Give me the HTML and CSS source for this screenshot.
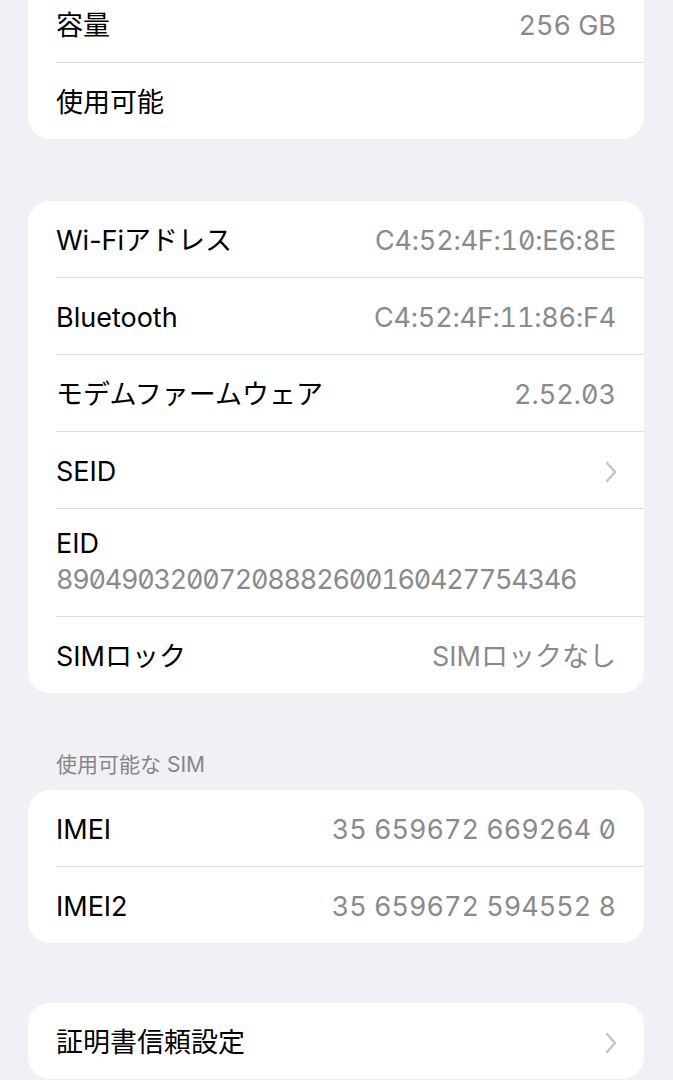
FILE: index.html
```html
<!DOCTYPE html>
<html lang="ja">
<head>
<meta charset="utf-8">
<link rel="stylesheet" href="styles.css">
</head>
<body>
<main class="page">
  <section class="card first">
    <div class="row"><span class="label">容量</span><span class="value">256 GB</span></div>
    <div class="row"><span class="label">使用可能</span><span class="value"></span></div>
  </section>

  <section class="card">
    <div class="row"><span class="label">Wi-Fiアドレス</span><span class="value mac">C4:52:4F:10:E6:8E</span></div>
    <div class="row"><span class="label">Bluetooth</span><span class="value mac">C4:52:4F:11:86:F4</span></div>
    <div class="row"><span class="label">モデムファームウェア</span><span class="value">2.52.03</span></div>
    <div class="row"><span class="label">SEID</span>
      <svg class="chev" viewBox="0 0 12 22" width="12" height="22"><path d="M2 2 L10 11 L2 20" fill="none" stroke="#c4c4c7" stroke-width="2.4" stroke-linecap="round" stroke-linejoin="round"/></svg>
    </div>
    <div class="row stack"><span class="label">EID</span><span class="value eid">89049032007208882600160427754346</span></div>
    <div class="row"><span class="label">SIMロック</span><span class="value">SIMロックなし</span></div>
  </section>

  <h2 class="header">使用可能な SIM</h2>
  <section class="card after-header">
    <div class="row"><span class="label">IMEI</span><span class="value">35 659672 669264 0</span></div>
    <div class="row"><span class="label">IMEI2</span><span class="value">35 659672 594552 8</span></div>
  </section>

  <section class="card last">
    <div class="row"><span class="label">証明書信頼設定</span>
      <svg class="chev" viewBox="0 0 12 22" width="12" height="22"><path d="M2 2 L10 11 L2 20" fill="none" stroke="#c4c4c7" stroke-width="2.4" stroke-linecap="round" stroke-linejoin="round"/></svg>
    </div>
  </section>
</main>
</body>
</html>
```

FILE: styles.css
```css
html, body {
  margin: 0;
  padding: 0;
  background: #f0f0f5;
}
body {
  font-family: Inter, "Noto Sans CJK JP", sans-serif;
  -webkit-font-smoothing: antialiased;
  overflow: hidden;
}
.page {
  display: flex;
  flex-direction: column;
  padding: 0 29px 40px 28px;
}
.card {
  background: #ffffff;
  border-radius: 22px;
  padding-left: 28px;
  margin-top: 62px;
}
.card.first {
  margin-top: -14px;
  border-radius: 0 0 22px 22px;
}
.card.after-header {
  margin-top: 12px;
}
.card.last {
  margin-top: 60px;
}
.row {
  display: flex;
  align-items: center;
  justify-content: space-between;
  min-height: 77px;
  padding-right: 28px;
  padding-top: 4px;
  border-bottom: 1px solid #dedee2;
  box-sizing: border-box;
}
.row:last-child {
  border-bottom: none;
  min-height: 76px;
}
.label {
  font-size: 27px;
  color: #000;
  line-height: 36px;
}
.value {
  font-size: 27px;
  color: #8a8a8e;
  line-height: 36px;
  font-feature-settings: "tnum" 1, "zero" 1;
}
.value.mac {
  letter-spacing: -0.2px;
}
.value.eid {
  letter-spacing: -1.25px;
}
.row.stack {
  flex-direction: column;
  align-items: flex-start;
  justify-content: flex-start;
  padding-top: 17px;
  padding-bottom: 18px;
}
.chev {
  display: block;
  margin-right: -1px;
}
.header {
  margin: 59px 0 0 28px;
  font-size: 21px;
  font-weight: 400;
  color: #86868b;
  line-height: 26px;
}
```
